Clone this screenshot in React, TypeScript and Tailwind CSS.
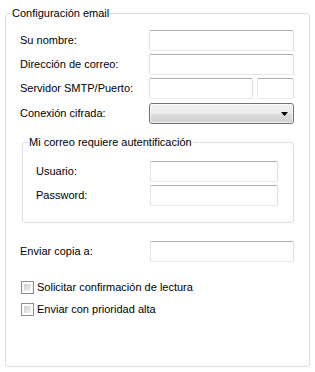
import React from 'react';

// Caja de texto estilo Vista
const TextBox = ({ className = '' }: { className?: string }) => (
    <div
        className={`h-[21px] rounded-[2px] border border-[#e3e9ef] border-t-[#abadb3] border-l-[#e2e3ea] border-r-[#dbdfe6] bg-white ${className}`}
    />
);

const CheckBox = ({ label }: { label: string }) => (
    <div className="flex items-center h-[13px]">
        <div className="ml-[1px] w-[13px] h-[13px] border border-[#8e8f8f] bg-white p-[2px]">
            <div className="w-full h-full bg-[linear-gradient(135deg,#cbcfd5,#f5f5f5)]" />
        </div>
        <span className="ml-[3px]">{label}</span>
    </div>
);

const Row = ({ label, labelWidth, children, className = '' }: { label: string; labelWidth: string; children: React.ReactNode; className?: string }) => (
    <div className={`flex items-center h-[21px] ${className}`}>
        <span className={labelWidth}>{label}</span>
        {children}
    </div>
);

export default function App() {
    return (
        <div className="w-[315px] h-[372px] bg-white pt-[7px] text-[11px] leading-[13px] text-black font-['Liberation_Sans',Arial,sans-serif]">
            <fieldset className="ml-[5px] w-[305px] h-[360px] border border-[#d5dfe5] rounded-[3px] p-0">
                <legend className="ml-[5px] px-[1px] leading-[13px]">Configuración email</legend>
                <div className="pl-[14px] pt-[10px]">
                    <Row label="Su nombre:" labelWidth="w-[129px]">
                        <TextBox className="w-[145px]" />
                    </Row>
                    <Row label="Dirección de correo:" labelWidth="w-[129px]" className="mt-[3px]">
                        <TextBox className="w-[145px]" />
                    </Row>
                    <Row label="Servidor SMTP/Puerto:" labelWidth="w-[129px]" className="mt-[3px]">
                        <TextBox className="w-[104px]" />
                        <TextBox className="ml-[4px] w-[37px]" />
                    </Row>
                    <Row label="Conexión cifrada:" labelWidth="w-[129px]" className="mt-[4px]">
                        <div className="relative w-[145px] h-[21px] rounded-[3px] border border-[#707070] bg-[linear-gradient(#f2f2f2,#ebebeb_50%,#dddddd_50%,#cfcfcf)]">
                            <div className="absolute inset-0 rounded-[2px] border border-white/70" />
                            <svg className="absolute right-[5px] top-[8px]" width="7" height="4" viewBox="0 0 7 4">
                                <path d="M0 0H7L3.5 4Z" fill="#000" />
                            </svg>
                        </div>
                    </Row>

                    {/* Autenticación */}
                    <fieldset className="mt-[12px] ml-[2px] w-[272px] border border-[#d5dfe5] rounded-[3px] p-0">
                        <legend className="ml-[5px] px-[1px] leading-[13px]">Mi correo requiere autentificación</legend>
                        <div className="pl-[13px] pt-[12px] pb-[16px]">
                            <Row label="Usuario:" labelWidth="w-[114px]">
                                <TextBox className="w-[128px]" />
                            </Row>
                            <Row label="Password:" labelWidth="w-[114px]" className="mt-[3px]">
                                <TextBox className="w-[128px]" />
                            </Row>
                        </div>
                    </fieldset>

                    <Row label="Enviar copia a:" labelWidth="w-[130px]" className="mt-[18px]">
                        <TextBox className="w-[144px]" />
                    </Row>

                    <div className="mt-[19px]">
                        <CheckBox label="Solicitar confirmación de lectura" />
                    </div>
                    <div className="mt-[9px]">
                        <CheckBox label="Enviar con prioridad alta" />
                    </div>
                </div>
            </fieldset>
        </div>
    );
}
